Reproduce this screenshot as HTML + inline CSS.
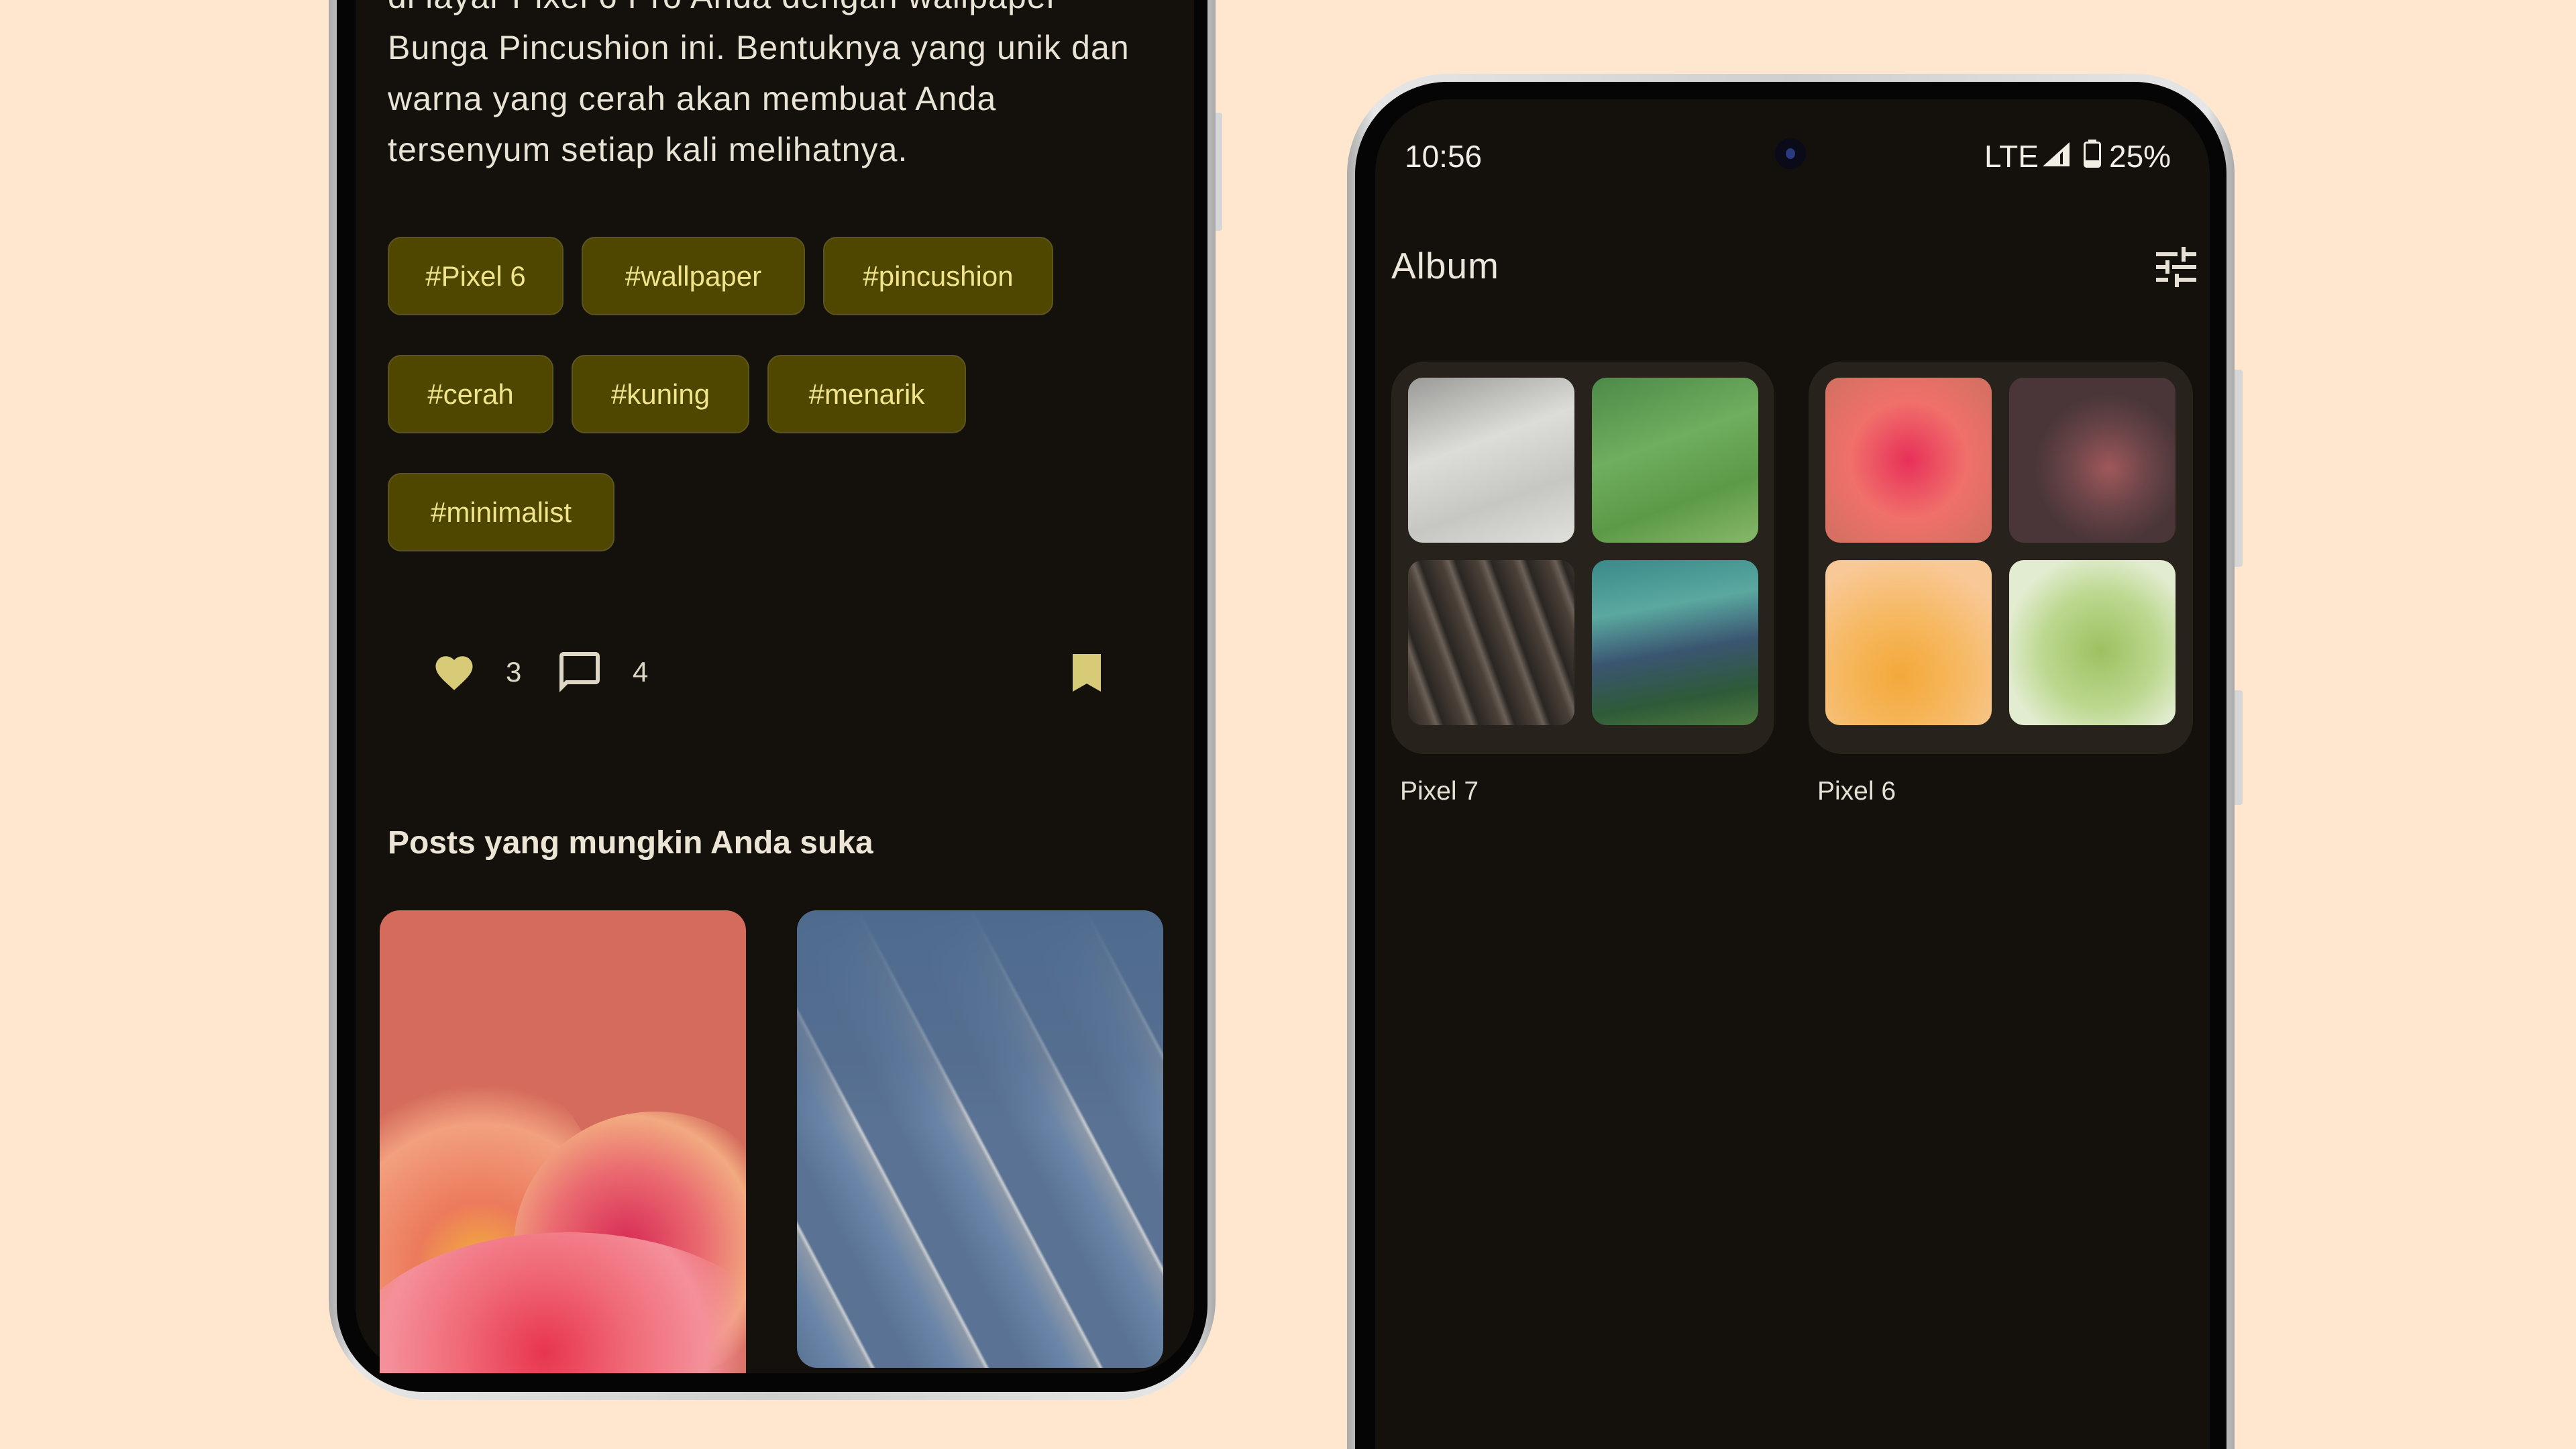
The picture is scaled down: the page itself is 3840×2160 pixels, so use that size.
<!DOCTYPE html>
<html><head><meta charset="utf-8"><style>
*{margin:0;padding:0;box-sizing:border-box}
html{width:3840px;height:2160px;overflow:hidden}
body{width:3840px;height:2160px;background:#fee6cf;position:relative;overflow:hidden;font-family:"Liberation Sans",sans-serif}
.abs{position:absolute}
.frame{position:absolute;background:linear-gradient(90deg,#aaa,#e6e6e6 3%,#cfcfcf 50%,#e6e6e6 97%,#aaa);border-radius:150px}
.bezel{position:absolute;background:#050505;border-radius:140px}
.screen{position:absolute;background:#14110c;overflow:hidden}
.btn{position:absolute;background:#d6d6d6;border-radius:4px}
.t{position:absolute;color:#e9e3d6;white-space:nowrap}
.chip{position:absolute;height:117px;background:#4f4600;border:2px solid #5c5520;border-radius:20px;color:#f0e48c;font-size:42px;line-height:113px;text-align:center}
.card{position:absolute;background:#27231c;border-radius:50px}
.th{position:absolute;width:248px;height:246px;border-radius:22px}
</style></head><body>

<!-- LEFT PHONE -->
<div class="btn" style="left:1806px;top:168px;width:16px;height:176px"></div>
<div class="frame" style="left:490px;top:-250px;width:1322px;height:2337px"></div>
<div class="bezel" style="left:502px;top:-250px;width:1298px;height:2325px;border-radius:130px"></div>
<div class="screen" style="left:530px;top:-250px;width:1250px;height:2297px;border-radius:100px"></div>
<div class="t" style="left:578px;top:-43px;font-size:50px;line-height:76px;letter-spacing:1.1px">di layar Pixel 6 Pro Anda dengan wallpaper<br>Bunga Pincushion ini. Bentuknya yang unik dan<br>warna yang cerah akan membuat Anda<br>tersenyum setiap kali melihatnya.</div>

<div class="chip" style="left:578px;top:353px;width:262px">#Pixel 6</div>
<div class="chip" style="left:867px;top:353px;width:333px">#wallpaper</div>
<div class="chip" style="left:1227px;top:353px;width:343px">#pincushion</div>
<div class="chip" style="left:578px;top:529px;width:247px">#cerah</div>
<div class="chip" style="left:852px;top:529px;width:265px">#kuning</div>
<div class="chip" style="left:1144px;top:529px;width:296px">#menarik</div>
<div class="chip" style="left:578px;top:705px;width:338px">#minimalist</div>

<svg class="abs" style="left:644px;top:970px" width="66" height="66" viewBox="0 0 24 24"><path fill="#d8cb78" d="M12 21.35l-1.45-1.32C5.4 15.36 2 12.28 2 8.5 2 5.42 4.42 3 7.5 3c1.740 0 3.41.81 4.5 2.09C13.09 3.81 14.76 3 16.5 3 19.58 3 22 5.42 22 8.5c0 3.78-3.4 6.86-8.55 11.54L12 21.35z"/></svg>
<div class="t" style="left:754px;top:978px;font-size:42px;color:#ddd6c4">3</div>
<svg class="abs" style="left:828px;top:966px" width="72" height="72" viewBox="0 0 24 24"><path fill="#ddd6c4" d="M20 2H4c-1.1 0-2 .9-2 2v18l4-4h14c1.1 0 2-.9 2-2V4c0-1.1-.9-2-2-2zm0 14H5.17L4 17.17V4h16v12z"/></svg>
<div class="t" style="left:943px;top:978px;font-size:42px;color:#ddd6c4">4</div>
<svg class="abs" style="left:1597px;top:975px" width="46" height="56" viewBox="0 0 46 56"><path fill="#d8cb78" d="M2 0h42v56L23 44 2 56z"/></svg>

<div class="t" style="left:578px;top:1229px;font-size:48px;font-weight:bold;color:#ece5d6">Posts yang mungkin Anda suka</div>

<div class="abs" style="left:566px;top:1357px;width:546px;height:690px;border-radius:30px 30px 0 0;overflow:hidden;background:#d46b5c">
  <div class="abs" style="left:-80px;top:220px;width:420px;height:520px;border-radius:50%;background:radial-gradient(circle at 55% 60%,#f4b23a 0,#ec7a5c 25%,#f2a07e 55%,rgba(240,150,120,0) 70%)"></div>
  <div class="abs" style="left:200px;top:300px;width:420px;height:400px;border-radius:50%;background:radial-gradient(circle at 40% 50%,#d82a55 0,#ea6a70 35%,#f2aa80 60%,rgba(240,160,120,0) 72%)"></div>
  <div class="abs" style="left:-60px;top:480px;width:680px;height:400px;border-radius:50%;background:radial-gradient(circle at 45% 45%,#e8354f 0,#f06b78 30%,#f4909a 55%,rgba(240,120,120,0) 72%)"></div>
</div>
<div class="abs" style="left:1188px;top:1357px;width:546px;height:682px;border-radius:30px;overflow:hidden;background:repeating-linear-gradient(62deg,#5a7394 0,#6a85a8 60px,#8c98a8 95px,#c8ccd0 100px,#5a7394 104px 150px)">
  <div class="abs" style="left:0;top:0;width:546px;height:320px;background:linear-gradient(180deg,#4e6b8e,rgba(80,105,140,0.5) 70%,rgba(80,105,140,0))"></div>
</div>

<!-- RIGHT PHONE -->
<div class="btn" style="left:3325px;top:551px;width:18px;height:294px"></div>
<div class="btn" style="left:3325px;top:1029px;width:18px;height:171px"></div>
<div class="frame" style="left:2008px;top:110px;width:1323px;height:2050px;border-radius:150px 150px 0 0"></div>
<div class="bezel" style="left:2020px;top:122px;width:1299px;height:2038px;border-radius:138px 138px 0 0"></div>
<div class="screen" style="left:2050px;top:148px;width:1244px;height:2012px;border-radius:110px 110px 0 0"></div>
<div class="t" style="left:2094px;top:206px;font-size:46px;color:#f2eee6">10:56</div>
<div class="abs" style="left:2646px;top:206px;width:46px;height:46px;border-radius:50%;background:#0a0a18"><div class="abs" style="left:16px;top:15px;width:14px;height:16px;border-radius:50%;background:#2a3a80"></div></div>
<div class="t" style="left:2958px;top:206px;font-size:46px;color:#f2eee6">LTE</div>
<svg class="abs" style="left:3045px;top:212px" width="40" height="36" viewBox="0 0 40 36"><path fill="#f2eee6" d="M40 0v36H0z"/><path fill="#14110c" d="M30 14v19h-4V18z"/></svg>
<svg class="abs" style="left:3106px;top:208px" width="26" height="42" viewBox="0 0 26 42"><rect x="7" y="0" width="12" height="5" fill="#f2eee6"/><rect x="1.5" y="4.5" width="23" height="36" rx="3" fill="none" stroke="#f2eee6" stroke-width="3"/><rect x="1" y="31" width="24" height="10" rx="3" fill="#f2eee6"/></svg>
<div class="t" style="left:3144px;top:206px;font-size:46px;color:#f2eee6">25%</div>

<div class="t" style="left:2074px;top:364px;font-size:55px;color:#ece6da;letter-spacing:1px">Album</div>
<svg class="abs" style="left:3214px;top:368px" width="60" height="60" viewBox="0 0 60 60" fill="#e6e0d4"><rect x="0" y="8" width="32" height="6"/><rect x="42" y="8" width="18" height="6"/><rect x="38" y="0" width="6" height="22"/><rect x="0" y="27" width="14" height="6"/><rect x="24" y="27" width="36" height="6"/><rect x="14" y="20" width="6" height="20"/><rect x="0" y="46" width="18" height="6"/><rect x="28" y="46" width="32" height="6"/><rect x="28" y="40" width="6" height="20"/></svg>

<div class="card" style="left:2074px;top:539px;width:571px;height:585px"></div>
<div class="card" style="left:2696px;top:539px;width:573px;height:585px"></div>
<div class="th" style="left:2099px;top:563px;background:linear-gradient(160deg,#9a9a98,#dcdcd8 40%,#c6c6c2 70%,#e0e0dc)"></div>
<div class="th" style="left:2373px;top:563px;background:linear-gradient(160deg,#4d8a4a,#6fae5e 40%,#5c9a48 70%,#88b86a)"></div>
<div class="th" style="left:2099px;top:835px;background:repeating-linear-gradient(70deg,#2a2622 0,#4a4038 30px,#6a6058 40px,#2a2622 50px)"></div>
<div class="th" style="left:2373px;top:835px;background:linear-gradient(170deg,#3a8a8a,#5aa8a0 30%,#3a5570 55%,#2e5a38 80%,#4e7a40)"></div>
<div class="th" style="left:2721px;top:563px;background:radial-gradient(circle at 50% 50%,#e8305a,#f0706a 50%,#d07060)"></div>
<div class="th" style="left:2995px;top:563px;background:radial-gradient(circle at 60% 55%,#a0585a 0,#6a4448 30%,#4a3638 55%)"></div>
<div class="th" style="left:2721px;top:835px;background:radial-gradient(circle at 45% 70%,#f4a83a,#f6b860 40%,#f8c896 80%)"></div>
<div class="th" style="left:2995px;top:835px;background:radial-gradient(circle at 55% 55%,#9ec060,#bcd890 45%,#e2ecd0 75%)"></div>
<div class="t" style="left:2087px;top:1158px;font-size:39px;color:#e6e0d4">Pixel 7</div>
<div class="t" style="left:2709px;top:1158px;font-size:39px;color:#e6e0d4">Pixel 6</div>
</body></html>
